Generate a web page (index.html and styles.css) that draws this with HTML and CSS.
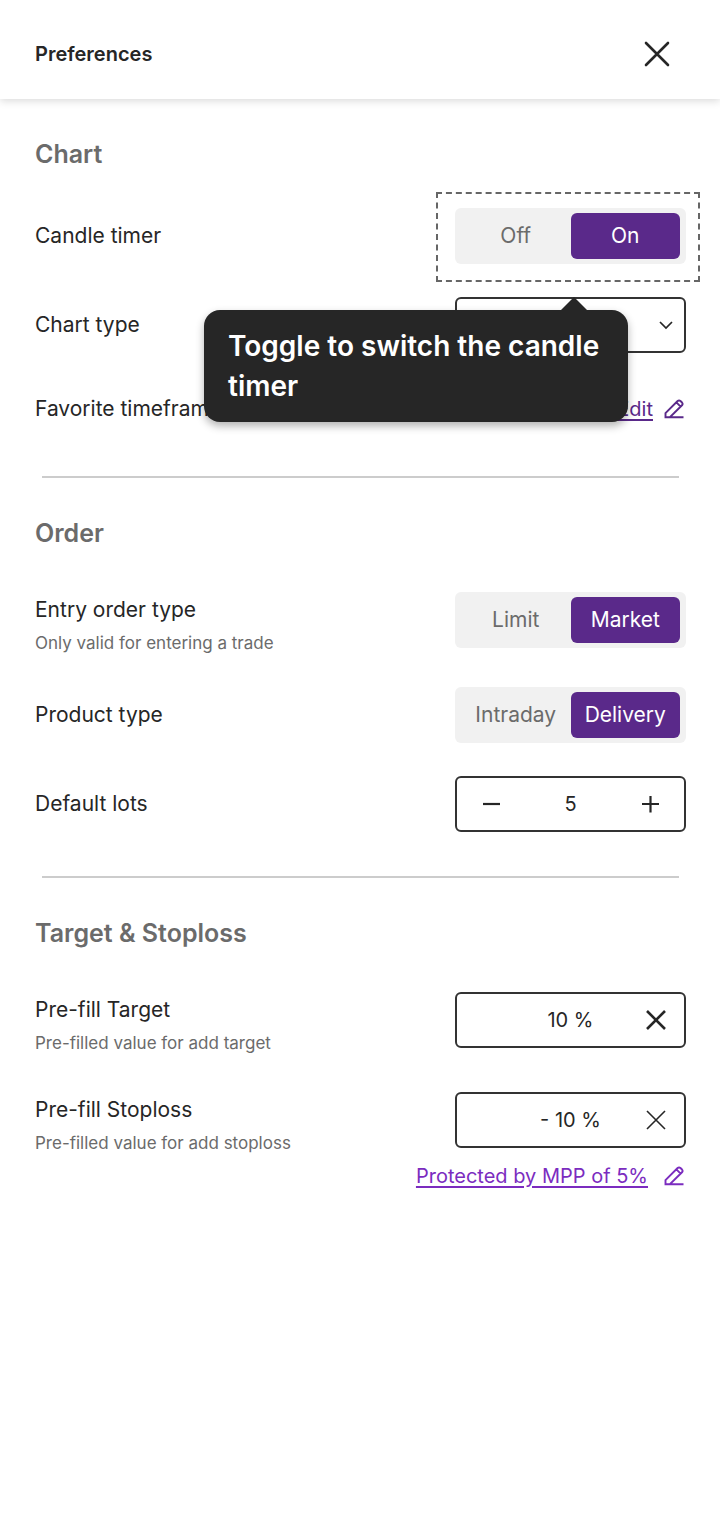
FILE: index.html
```html
<!DOCTYPE html>
<html lang="en">
<head>
    <meta charset="UTF-8">
    <meta name="viewport" content="width=device-width, initial-scale=1.0">
    <title>Preferences</title>
    <link rel="stylesheet" href="styles.css">
</head>
<body>

<header class="header">
    <h1>Preferences</h1>
    <button type="button" class="close" aria-label="Close">
        <svg width="28" height="28" viewBox="0 0 28 28"><path d="M3 3L25 25M25 3L3 25" stroke-width="2.600" stroke-linecap="round"/></svg>
    </button>
</header>

<main>
    <section class="section section-chart">
        <h2>Chart</h2>
        <div class="row">
            <span class="label" id="timerLabel">Candle timer</span>
            <div class="control">
                <div class="toggle" role="radiogroup" aria-labelledby="timerLabel">
                    <label><input type="radio" name="timer"><span>Off</span></label>
                    <label><input type="radio" name="timer" checked><span>On</span></label>
                </div>
                <div class="highlight"></div>
                <div class="tooltip" role="tooltip">Toggle to switch the candle timer</div>
            </div>
        </div>
        <div class="row">
            <label class="label" for="chartType">Chart type</label>
            <div class="control box">
                <select id="chartType">
                    <option>Candle</option>
                </select>
                <svg class="chevron" width="16" height="16" viewBox="0 0 16 16"><path d="M2 5L8 11L14 5" stroke-width="1.700"/></svg>
            </div>
        </div>
        <div class="row row-link">
            <span class="label">Favorite timeframes</span>
            <a class="link link-edit" href="#">
                <span>Edit</span>
                <svg width="20" height="20" viewBox="0 0 20 20"><path d="M5.800 18.300H1.500V14.200L13.600 2Q15 .8 16.500 2L18 3.500Q19.200 5 18 6.300L5.800 18.300H19.500M12.400 3.400L16.600 7.600" stroke-width="1.900"/></svg>
            </a>
        </div>
    </section>

    <hr>

    <section class="section">
        <h2>Order</h2>
        <div class="row">
            <div class="label" id="entryLabel">Entry order type<small>Only valid for entering a trade</small></div>
            <div class="control toggle" role="radiogroup" aria-labelledby="entryLabel">
                <label><input type="radio" name="entry"><span>Limit</span></label>
                <label><input type="radio" name="entry" checked><span>Market</span></label>
            </div>
        </div>
        <div class="row">
            <span class="label" id="productLabel">Product type</span>
            <div class="control toggle" role="radiogroup" aria-labelledby="productLabel">
                <label><input type="radio" name="product"><span>Intraday</span></label>
                <label><input type="radio" name="product" checked><span>Delivery</span></label>
            </div>
        </div>
        <div class="row">
            <label class="label" for="lots">Default lots</label>
            <div class="control box">
                <button type="button" aria-label="Decrease">
                    <svg width="20" height="20" viewBox="0 0 20 20"><path d="M2 10H19" stroke-width="2.200"/></svg>
                </button>
                <input type="text" id="lots" value="5">
                <button type="button" aria-label="Increase">
                    <svg width="20" height="20" viewBox="0 0 20 20"><path d="M2 10H19M10.500 2V18.500" stroke-width="2.200"/></svg>
                </button>
            </div>
        </div>
    </section>

    <hr>

    <section class="section section-target">
        <h2>Target &amp; Stoploss</h2>
        <div class="row">
            <label class="label" for="target">Pre-fill Target<small>Pre-filled value for add target</small></label>
            <div class="control box clearable">
                <input type="text" id="target" value="10 %">
                <button type="button" aria-label="Clear target">
                    <svg width="20" height="20" viewBox="0 0 20 20"><path d="M1 1L19 19M19 1L1 19" stroke-width="2.600"/></svg>
                </button>
            </div>
        </div>
        <div class="row">
            <label class="label" for="stoploss">Pre-fill Stoploss<small>Pre-filled value for add stoploss</small></label>
            <div class="control box clearable">
                <input type="text" id="stoploss" value="- 10 %">
                <button type="button" aria-label="Clear stoploss">
                    <svg width="20" height="20" viewBox="0 0 20 20"><path d="M1 1L19 19M19 1L1 19" stroke-width="1.600"/></svg>
                </button>
            </div>
        </div>
        <a class="link link-mpp" href="#">
            <span>Protected by MPP of 5%</span>
            <svg width="20" height="20" viewBox="0 0 20 20"><path d="M5.800 18.300H1.500V14.200L13.600 2Q15 .8 16.500 2L18 3.500Q19.200 5 18 6.300L5.800 18.300H19.500M12.400 3.400L16.600 7.600" stroke-width="1.900"/></svg>
        </a>
    </section>
</main>

</body>
</html>
```
FILE: styles.css
```css
* {
    box-sizing: border-box;
}
body {
    margin: 0;
    background-color: #fff;
    color: #262626;
    font-family: Inter, "Liberation Sans", sans-serif;
    font-size: 20px;
    line-height: 28px;
}
svg {
    display: block;
    fill: none;
    stroke: currentColor;
}
button {
    display: flex;
    align-items: center;
    justify-content: center;
    padding: 0;
    border: none;
    background: none;
    color: inherit;
    cursor: pointer;
}
.header {
    display: flex;
    align-items: center;
    justify-content: space-between;
    padding: 30px 35px 21px;
    box-shadow: 0 2px 8px rgba(0, 0, 0, 0.15);
}
.header h1 {
    margin: 0;
    font-size: 20px;
    font-weight: 600;
}
.close {
    width: 48px;
    height: 48px;
    margin-right: 4px;
}
.section {
    display: flex;
    flex-direction: column;
    padding: 39px 34px 44px 35px;
}
.section h2 {
    margin: 0 0 43px;
    color: #6b6b6b;
    font-size: 25px;
    font-weight: 600;
    line-height: 32px;
}
.section-chart h2 {
    margin-bottom: 38px;
}
.row {
    display: flex;
    justify-content: space-between;
    min-height: 56px;
}
.row + .row {
    margin-top: 33px;
}
.section-target .row + .row {
    margin-top: 38px;
}
.row-link {
    min-height: 46px;
}
.label {
    align-self: center;
    font-size: 21px;
}
.label:has(small) {
    padding-top: 4px;
}
.label small {
    display: block;
    margin-top: 8px;
    color: #6b6b6b;
    font-size: 17px;
    line-height: 22px;
}
.control {
    position: relative;
    width: 231px;
    height: 56px;
}
.toggle {
    display: grid;
    grid-template-columns: 1fr 1fr;
    height: 56px;
    padding: 5px 6px;
    border-radius: 6px;
    background-color: #f1f1f1;
    color: #6b6b6b;
    font-size: 21px;
}
.toggle label {
    display: flex;
    cursor: pointer;
}
.toggle input {
    position: absolute;
    opacity: 0;
}
.toggle span {
    flex: 1;
    border-radius: 6px;
    line-height: 46px;
    text-align: center;
}
.toggle input:checked + span {
    background-color: #5a298a;
    color: #fff;
}
.highlight {
    position: absolute;
    inset: -16px -14px -18px -19px;
    border: 2px dashed #666;
    pointer-events: none;
}
.tooltip {
    position: absolute;
    top: 102px;
    right: 58px;
    z-index: 1;
    width: 424px;
    padding: 16px 24px;
    border-radius: 16px;
    background-color: #262626;
    box-shadow: 0 4px 8px rgba(0, 0, 0, 0.3);
    color: #fff;
    font-size: 28px;
    font-weight: 600;
    line-height: 40px;
}
.tooltip::before {
    content: "";
    position: absolute;
    top: -13px;
    right: 40px;
    border: 14px solid transparent;
    border-top: none;
    border-bottom: 14px solid #262626;
}
.box {
    display: flex;
    align-items: center;
    border: 2px solid #333;
    border-radius: 6px;
}
.box input, .box select {
    flex: 1;
    min-width: 0;
    height: 100%;
    padding: 0 20px;
    border: none;
    background: none;
    color: inherit;
    font: inherit;
    appearance: none;
}
.box input {
    padding: 0;
    text-align: center;
}
.box button {
    width: 68px;
    height: 100%;
}
.clearable {
    padding-left: 56px;
}
.box.clearable button {
    width: 56px;
}
.chevron {
    position: absolute;
    right: 10px;
    pointer-events: none;
}
.link {
    display: flex;
    align-items: center;
    align-self: center;
    gap: 11px;
    padding-right: 2px;
    color: #5a298a;
    text-decoration: none;
}
.link span {
    text-decoration: underline;
    text-decoration-thickness: 2px;
    text-underline-offset: 3px;
}
.link-mpp {
    align-self: flex-end;
    gap: 16px;
    margin-top: 8px;
    color: #7b2cbf;
}
hr {
    height: 2px;
    margin: 0 41px 0 42px;
    border: none;
    background-color: #ccc;
}
```
